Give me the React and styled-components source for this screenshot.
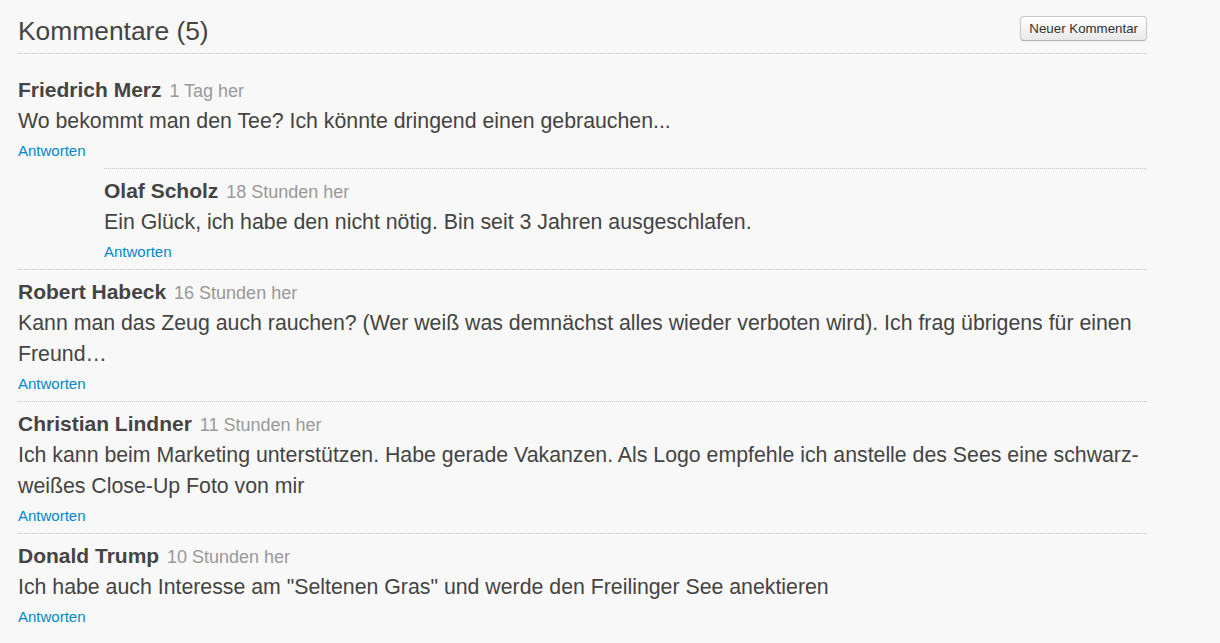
import React from 'react';
import styled, { createGlobalStyle } from 'styled-components';

const GlobalStyle = createGlobalStyle`
	html, body {
		margin: 0;
		padding: 0;
		background: #f8f8f8;
	}
	body {
		font-family: 'Liberation Sans', Arial, Helvetica, sans-serif;
		color: #444;
	}
`;

const Section = styled.section`
	width: 1129px;
	padding: 16px 0 0 18px;
`;

const HeaderRow = styled.div`
	display: flex;
	align-items: flex-start;
	justify-content: space-between;
	padding-bottom: 7px;
	border-bottom: 1px dotted #c4c4c4;
`;

const Title = styled.h2`
	margin: 0;
	font-size: 26.4px;
	line-height: 30px;
	font-weight: 400;
	color: #444;
`;

const Button = styled.button`
	height: 25px;
	padding: 0 8px;
	font-family: inherit;
	font-size: 13.3px;
	color: #333;
	background: linear-gradient(#ffffff, #e8e8e8);
	border: 1px solid #c8c8c8;
	border-bottom-color: #b3b3b3;
	border-radius: 4px;
	box-shadow: inset 0 1px 0 rgba(255, 255, 255, 0.2), 0 1px 2px rgba(0, 0, 0, 0.05);
	cursor: pointer;
`;

const List = styled.div`
	margin-top: 13px;
`;

const Comment = styled.div`
	margin-left: ${(p) => (p.$nested ? '86px' : '0')};
	padding: 7px 0 7px;
	border-top: 1px dotted ${(p) => (p.$first ? 'transparent' : '#c4c4c4')};
`;

const Meta = styled.div`
	height: 30px;
	margin-bottom: 1px;
	font-size: 21px;
	line-height: 30px;
	white-space: nowrap;
`;

const Author = styled.span`
	font-size: 21px;
	font-weight: 700;
	color: #444;
`;

const Time = styled.span`
	margin-left: 2px;
	font-size: 18px;
	line-height: 1;
	color: #999;
`;

const Body = styled.p`
	margin: 0;
	font-size: 21.3px;
	line-height: 31px;
	color: #444;
`;

const Actions = styled.div`
	height: 24px;
`;

const ReplyLink = styled.a`
	display: inline-block;
	margin-top: 4px;
	font-size: 15px;
	line-height: 20px;
	color: #0088cc;
	text-decoration: none;
	vertical-align: top;
`;

const comments = [
	{
		author: 'Friedrich Merz',
		time: '1 Tag her',
		text: 'Wo bekommt man den Tee? Ich könnte dringend einen gebrauchen...',
		replies: [
			{
				author: 'Olaf Scholz',
				time: '18 Stunden her',
				text: 'Ein Glück, ich habe den nicht nötig. Bin seit 3 Jahren ausgeschlafen.',
			},
		],
	},
	{
		author: 'Robert Habeck',
		time: '16 Stunden her',
		text: 'Kann man das Zeug auch rauchen? (Wer weiß was demnächst alles wieder verboten wird). Ich frag übrigens für einen Freund…',
	},
	{
		author: 'Christian Lindner',
		time: '11 Stunden her',
		text: 'Ich kann beim Marketing unterstützen. Habe gerade Vakanzen. Als Logo empfehle ich anstelle des Sees eine schwarz-weißes Close-Up Foto von mir',
	},
	{
		author: 'Donald Trump',
		time: '10 Stunden her',
		text: 'Ich habe auch Interesse am "Seltenen Gras" und werde den Freilinger See anektieren',
	},
];

const CommentItem = ({ c, first, nested }) => (
	<Comment $first={first} $nested={nested}>
		<Meta>
			<Author>{c.author}</Author> <Time>{c.time}</Time>
		</Meta>
		<Body>{c.text}</Body>
		<Actions>
			<ReplyLink href='#'>Antworten</ReplyLink>
		</Actions>
	</Comment>
);

export default function App() {
	return (
		<>
			<GlobalStyle />
			<Section>
				<HeaderRow>
					<Title>Kommentare (5)</Title>
					<Button>Neuer Kommentar</Button>
				</HeaderRow>
				<List>
					{comments.map((c, i) => (
						<React.Fragment key={c.author}>
							<CommentItem c={c} first={i === 0} />
							{(c.replies || []).map((r) => (
								<CommentItem key={r.author} c={r} nested />
							))}
						</React.Fragment>
					))}
				</List>
			</Section>
		</>
	);
}
